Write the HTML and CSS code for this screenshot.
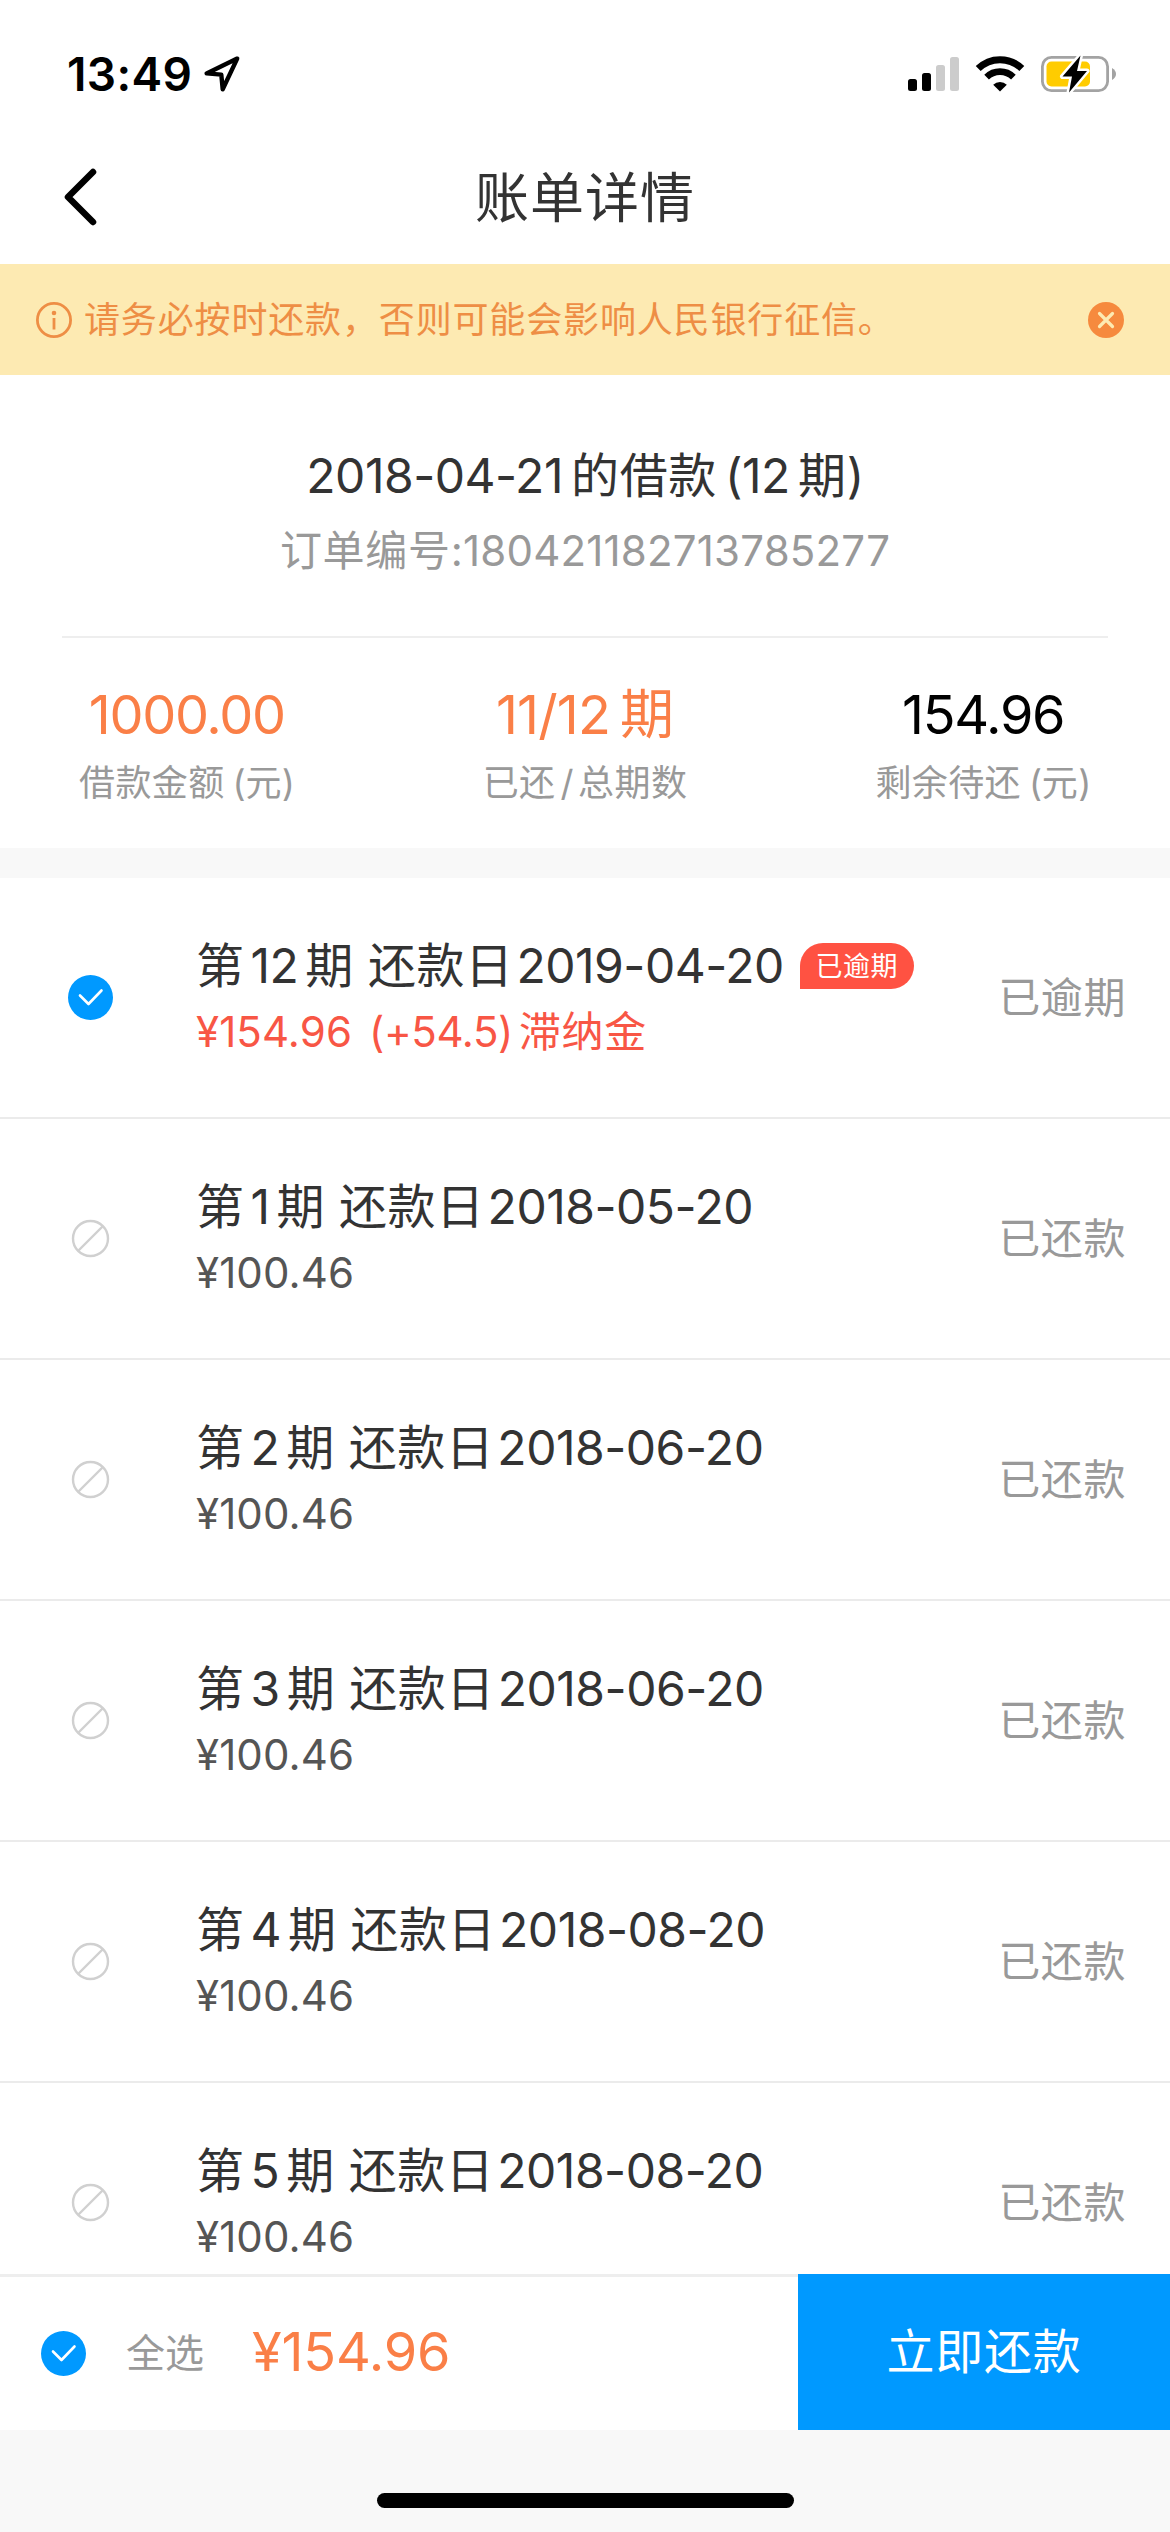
FILE: index.html
```html
<!DOCTYPE html>
<html lang="zh-CN">
<head>
  <meta charset="UTF-8">
  <meta name="viewport" content="width=device-width, initial-scale=1.0">
  <title>账单详情</title>
  <link rel="stylesheet" href="styles.css">
</head>
<body>

  <!-- Shared icons -->
  <svg class="icon-defs" width="0" height="0">
    <symbol id="icon-check" viewBox="0 0 45 45">
      <circle cx="22.5" cy="22.5" r="22.5" fill="#0099ff"/>
      <path d="M12 20.5 L20.5 29 L33.5 15.5" fill="none" stroke="#fff" stroke-width="2.6" stroke-linecap="round" stroke-linejoin="round"/>
    </symbol>
    <symbol id="icon-ban" viewBox="0 0 45 45">
      <circle cx="22.5" cy="22.5" r="17.5" fill="none" stroke="#d0d0d0" stroke-width="2.4"/>
      <path d="M10.5 34.5 L34.5 10.5" stroke="#d0d0d0" stroke-width="2.4"/>
    </symbol>
  </svg>

  <div class="app">
    <div class="status-bar">
      <div class="status-left">
        <span class="time">13:49</span>
        <svg width="38" height="38" viewBox="0 0 38 38">
          <path d="M34.2 3.6 L3.6 18.4 L18.3 19.6 L19.7 34.2 Z" fill="none" stroke="#000" stroke-width="4.4" stroke-linejoin="round"/>
        </svg>
      </div>
      <div class="status-right">
        <svg width="51" height="36" viewBox="0 0 51 36">
          <rect x="0" y="23" width="9" height="12" rx="2.5" fill="#000"/>
          <rect x="14" y="17" width="9" height="18" rx="2.5" fill="#000"/>
          <rect x="28" y="9" width="9" height="26" rx="2.5" fill="#ccc"/>
          <rect x="42" y="1" width="9" height="34" rx="2.5" fill="#ccc"/>
        </svg>
        <svg class="wifi" width="50" height="36" viewBox="0 0 50 36">
          <path d="M3.2 12.6 A31 31 0 0 1 46.8 12.6" fill="none" stroke="#000" stroke-width="7"/>
          <path d="M11.6 21.2 A19 19 0 0 1 38.4 21.2" fill="none" stroke="#000" stroke-width="6.6"/>
          <path d="M25 35.5 L18.2 28.7 A9.8 9.8 0 0 1 31.8 28.7 Z" fill="#000"/>
        </svg>
        <svg width="77" height="40" viewBox="0 0 77 40">
          <rect x="2.4" y="3.4" width="65.2" height="33.2" rx="9" fill="none" stroke="#a3a3a3" stroke-width="2.8"/>
          <path d="M72 14 Q76 16.5 76 20 Q76 23.5 72 26 Z" fill="#a3a3a3"/>
          <rect x="6.5" y="7.5" width="43.5" height="25" rx="5" fill="#ffcc00"/>
          <path d="M40.5 1.5 L22.5 22.5 H32 L29 38.5 L47 17 H37 Z" fill="#000" stroke="#fff" stroke-width="5" stroke-linejoin="round" paint-order="stroke"/>
        </svg>
      </div>
    </div>

    <div class="nav-bar">
      <svg width="36" height="60" viewBox="0 0 36 60">
        <path d="M31 5 L6 30 L31 55" fill="none" stroke="#000" stroke-width="6.5" stroke-linecap="round" stroke-linejoin="round"/>
      </svg>
      <h1>账单详情</h1>
    </div>

    <div class="notice">
      <svg width="36" height="36" viewBox="0 0 36 36">
        <circle cx="18" cy="18" r="16.6" fill="none" stroke="#ee8e45" stroke-width="2.8"/>
        <circle cx="18" cy="11" r="2.3" fill="#ee8e45"/>
        <path d="M18 16 V27.5" stroke="#ee8e45" stroke-width="2.8"/>
      </svg>
      <p>请务必按时还款，否则可能会影响人民银行征信。</p>
      <svg width="36" height="36" viewBox="0 0 36 36">
        <circle cx="18" cy="18" r="18" fill="#f68a3e"/>
        <path d="M11.5 11.5 L24.5 24.5 M24.5 11.5 L11.5 24.5" stroke="#fdeab2" stroke-width="3.2" stroke-linecap="round"/>
      </svg>
    </div>

    <div class="summary">
      <h2><span class="num">2018-04-21</span>的借款<span class="num gap">(12</span>期<span class="num">)</span></h2>
      <p class="order-no">订单编号<span class="num">:180421182713785277</span></p>
      <div class="stats">
        <div class="stat">
          <div class="value orange"><span class="num">1000.00</span></div>
          <div class="label">借款金额<span class="num gap">(</span>元<span class="num">)</span></div>
        </div>
        <div class="stat">
          <div class="value orange"><span class="num periods">11/12</span>期</div>
          <div class="label">已还<span class="num slash">/</span>总期数</div>
        </div>
        <div class="stat">
          <div class="value"><span class="num">154.96</span></div>
          <div class="label">剩余待还<span class="num gap">(</span>元<span class="num">)</span></div>
        </div>
      </div>
    </div>

    <div class="bill-list">
      <div class="bill">
        <svg class="select"><use href="#icon-check"/></svg>
        <div class="bill-info">
          <div class="bill-title">第<span class="num no">12</span>期<span class="sp"></span>还款日<span class="num date">2019-04-20</span><span class="badge">已逾期</span></div>
          <div class="bill-amount overdue"><span class="num">¥154.96</span><span class="num fee">(+54.5)</span>滞纳金</div>
        </div>
        <div class="bill-status">已逾期</div>
      </div>
      <div class="bill">
        <svg class="select"><use href="#icon-ban"/></svg>
        <div class="bill-info">
          <div class="bill-title">第<span class="num no">1</span>期<span class="sp"></span>还款日<span class="num date">2018-05-20</span></div>
          <div class="bill-amount"><span class="num">¥100.46</span></div>
        </div>
        <div class="bill-status">已还款</div>
      </div>
      <div class="bill">
        <svg class="select"><use href="#icon-ban"/></svg>
        <div class="bill-info">
          <div class="bill-title">第<span class="num no">2</span>期<span class="sp"></span>还款日<span class="num date">2018-06-20</span></div>
          <div class="bill-amount"><span class="num">¥100.46</span></div>
        </div>
        <div class="bill-status">已还款</div>
      </div>
      <div class="bill">
        <svg class="select"><use href="#icon-ban"/></svg>
        <div class="bill-info">
          <div class="bill-title">第<span class="num no">3</span>期<span class="sp"></span>还款日<span class="num date">2018-06-20</span></div>
          <div class="bill-amount"><span class="num">¥100.46</span></div>
        </div>
        <div class="bill-status">已还款</div>
      </div>
      <div class="bill">
        <svg class="select"><use href="#icon-ban"/></svg>
        <div class="bill-info">
          <div class="bill-title">第<span class="num no">4</span>期<span class="sp"></span>还款日<span class="num date">2018-08-20</span></div>
          <div class="bill-amount"><span class="num">¥100.46</span></div>
        </div>
        <div class="bill-status">已还款</div>
      </div>
      <div class="bill">
        <svg class="select"><use href="#icon-ban"/></svg>
        <div class="bill-info">
          <div class="bill-title">第<span class="num no">5</span>期<span class="sp"></span>还款日<span class="num date">2018-08-20</span></div>
          <div class="bill-amount"><span class="num">¥100.46</span></div>
        </div>
        <div class="bill-status">已还款</div>
      </div>
    </div>

    <div class="pay-bar">
      <div class="pay-left">
        <svg class="select"><use href="#icon-check"/></svg>
        <span class="select-all">全选</span>
        <span class="total num">¥154.96</span>
      </div>
      <button class="pay-btn">立即还款</button>
    </div>

    <div class="home-area">
      <div class="home-indicator"></div>
    </div>
  </div>

</body>
</html>
```
FILE: styles.css
```css
* {
  box-sizing: border-box;
}

body {
  margin: 0;
  font-family: "Noto Sans CJK SC", sans-serif;
  color: #333;
  background-color: #f8f8f8;
}

h1, h2, p {
  margin: 0;
  font-weight: 400;
}

svg {
  display: block;
  flex-shrink: 0;
}

.icon-defs {
  position: absolute;
}

/* Latin digits, line-height kept small so they don't stretch the line */
.num {
  font-family: Inter, "Noto Sans CJK SC", sans-serif;
  line-height: 1;
  letter-spacing: -0.01em;
}

.app {
  width: 1170px;
  height: 2532px;
  display: flex;
  flex-direction: column;
  overflow: hidden;
}

/* Status bar */
.status-bar {
  height: 132px;
  padding: 16px 53px 0 67px;
  display: flex;
  align-items: center;
  justify-content: space-between;
  background-color: #fff;
}

.status-left, .status-right {
  display: flex;
  align-items: center;
}

.time {
  width: 136px;
  font-family: Inter, sans-serif;
  font-size: 46px;
  font-weight: 600;
  letter-spacing: 0.4px;
  color: #000;
  white-space: nowrap;
}

.wifi {
  margin: 0 15px 0 16px;
}

/* Nav bar */
.nav-bar {
  height: 132px;
  padding: 0 62px 3px;
  display: grid;
  grid-template-columns: 36px 1fr 36px;
  align-items: center;
  background-color: #fff;
}

.nav-bar h1 {
  padding-bottom: 4px;
  font-size: 54px;
  line-height: 120px;
  letter-spacing: 1px;
  text-align: center;
}

/* Notice */
.notice {
  height: 111px;
  padding: 0 46px 0 36px;
  display: flex;
  align-items: center;
  color: #ee8e45;
  background-color: #fdeab2;
}

.notice p {
  flex: 1;
  margin-left: 12px;
  padding-bottom: 5px;
  font-size: 36px;
  letter-spacing: 0.85px;
}

/* Loan summary */
.summary {
  height: 473px;
  padding: 62px 62px 0;
  text-align: center;
  background-color: #fff;
}

.summary h2 {
  font-size: 48px;
  line-height: 70px;
  letter-spacing: 0.7px;
}

.gap {
  margin-left: 8px;
}

.summary h2 .num {
  margin-right: 8px;
}

.summary h2 .num:last-child {
  margin-right: 0;
}

.order-no {
  margin-top: 11px;
  font-size: 42px;
  line-height: 60px;
  letter-spacing: 0.7px;
  color: #999;
}

.order-no .num {
  letter-spacing: 0.2px;
}

.stats {
  margin-top: 58px;
  padding: 38px 17px 0;
  display: flex;
  justify-content: space-between;
  border-top: 2px solid #eee;
}

.value {
  font-size: 54px;
  line-height: 70px;
  color: #000;
}

.value .num {
  letter-spacing: -0.024em;
}

.value .periods {
  margin-right: 10px;
  letter-spacing: -0.015em;
}

.value.orange {
  color: #fa7f47;
}

.label {
  margin-top: 2px;
  font-size: 36px;
  line-height: 64px;
  letter-spacing: 0.4px;
  color: #999;
}

.slash {
  margin: 0 5px;
}

/* Bill list */
.bill-list {
  flex: 1;
  min-height: 0;
  margin-top: 30px;
  overflow: hidden;
  background-color: #fff;
}

.bill {
  height: 241px;
  padding: 0 44px 0 68px;
  display: flex;
  align-items: center;
  border-bottom: 2px solid #ebebeb;
}

.select {
  width: 45px;
  height: 45px;
}

.bill-info {
  flex: 1;
  margin-left: 83px;
  padding-bottom: 5px;
}

.bill-title {
  display: flex;
  align-items: baseline;
  height: 68px;
  font-size: 48px;
  line-height: 68px;
  letter-spacing: 0.5px;
  white-space: nowrap;
}

.no {
  margin: 0 7px 0 6px;
}

.sp {
  width: 14px;
}

.date {
  margin-left: 3px;
}

.badge {
  align-self: center;
  width: 114px;
  height: 46px;
  margin: 7px 0 0 16px;
  border-radius: 23px 23px 23px 0;
  font-size: 27px;
  line-height: 44px;
  text-align: center;
  color: #fff;
  background-color: #ff5242;
}

.bill-amount {
  font-size: 42px;
  line-height: 66px;
  letter-spacing: 0.6px;
  color: #555;
}

.bill-amount .num {
  letter-spacing: 0.1px;
}

.bill-amount.overdue {
  color: #f85645;
}

.bill-amount .fee {
  margin: 0 6px 0 17px;
  letter-spacing: -0.4px;
}

.bill-status {
  padding-bottom: 6px;
  font-size: 42px;
  letter-spacing: 0.6px;
  color: #999;
}

/* Pay bar */
.pay-bar {
  height: 156px;
  display: flex;
  background-color: #fff;
}

.pay-left {
  flex: 1;
  padding-left: 41px;
  display: flex;
  align-items: center;
  border-top: 3px solid #eee;
}

.select-all {
  margin-left: 40px;
  padding-bottom: 8px;
  font-size: 39px;
  color: #999;
}

.total {
  margin-left: 48px;
  padding-bottom: 4px;
  font-size: 54px;
  letter-spacing: -0.2px;
  color: #fa7f47;
}

.pay-btn {
  width: 372px;
  border: none;
  padding: 0 0 9px;
  font-family: inherit;
  font-size: 48px;
  letter-spacing: 0.7px;
  color: #fff;
  background-color: #0099ff;
}

/* Home indicator */
.home-area {
  height: 102px;
  padding-top: 63px;
}

.home-indicator {
  width: 417px;
  height: 15px;
  margin: 0 auto;
  border-radius: 8px;
  background-color: #000;
}
```
